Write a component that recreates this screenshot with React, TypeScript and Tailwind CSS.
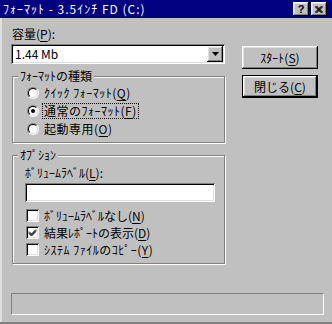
import React from 'react';

const font = { fontFamily: '"Noto Sans CJK JP", "MS UI Gothic", sans-serif' };

const raised =
  'shadow-[inset_-1px_-1px_0_#000,inset_1px_1px_0_#fff,inset_-2px_-2px_0_#808080,inset_2px_2px_0_#dfdfdf]';
const sunken =
  'shadow-[inset_1px_1px_0_#808080,inset_-1px_-1px_0_#fff,inset_2px_2px_0_#000,inset_-2px_-2px_0_#dfdfdf]';

function Key({ k }: { k: string }) {
  return <span className="underline underline-offset-2">{k}</span>;
}

function Radio({ checked }: { checked?: boolean }) {
  return (
    <span className="w-[12px] h-[12px] rounded-full border border-t-[#808080] border-l-[#808080] border-b-white border-r-white flex shrink-0">
      <span className="w-[10px] h-[10px] rounded-full border border-t-black border-l-black border-b-[#dfdfdf] border-r-[#dfdfdf] bg-white flex items-center justify-center">
        {checked && <span className="w-[4px] h-[4px] rounded-full bg-black" />}
      </span>
    </span>
  );
}

function Check({ checked }: { checked?: boolean }) {
  return (
    <span className={`w-[13px] h-[13px] bg-white shrink-0 flex items-center justify-center ${sunken}`}>
      {checked && (
        <svg width="9" height="9" viewBox="0 0 9 9">
          <path d="M1 3.5 L3.5 6 L8 1.5 M1 4.5 L3.5 7 L8 2.5 M1 5.5 L3.5 8 L8 3.5" stroke="#000" strokeWidth="1" fill="none" />
        </svg>
      )}
    </span>
  );
}

function Group({ title, h, children }: { title: string; h: string; children: React.ReactNode }) {
  return (
    <div className={`relative border border-[#808080] shadow-[1px_1px_0_#fff,inset_1px_1px_0_#fff] ${h}`}>
      <span className="absolute left-[5px] top-[-8px] px-[2px] bg-[#c0c0c0] leading-[14px]">{title}</span>
      {children}
    </div>
  );
}

export default function App() {
  return (
    <div className="w-[332px] h-[324px] bg-[#c0c0c0] text-[12px] leading-[14px] text-black flex flex-col" style={font}>
      {/* title bar */}
      <div className="h-[18px] bg-[#000080] flex items-center pl-[3px] pr-[5px] shrink-0">
        <span className="text-white flex-1 leading-[14px] tracking-[1px]">ﾌｫｰﾏｯﾄ - 3.5ｲﾝﾁ FD (C:)</span>
        <div className="flex gap-[2px]">
          <span className={`w-[16px] h-[14px] bg-[#c0c0c0] flex items-center justify-center font-bold text-[11px] leading-none ${raised}`} style={{ fontFamily: '"Liberation Sans", sans-serif' }}>
            ?
          </span>
          <span className={`w-[16px] h-[14px] bg-[#c0c0c0] flex items-center justify-center ${raised}`}>
            <svg width="8" height="7" viewBox="0 0 8 7">
              <path d="M0.5 0 L7.5 7 M1.5 0 L7.5 6 M0.5 1 L6.5 7 M7.5 0 L0.5 7 M6.5 0 L0.5 6 M7.5 1 L1.5 7" stroke="#000" strokeWidth="1" fill="none" />
            </svg>
          </span>
        </div>
      </div>

      {/* body */}
      <div className="flex-1 flex flex-col pl-[11px] pr-[9px] border-b-2 border-[#808080] shadow-[inset_2px_0_0_#dfdfdf]">
        <div className="flex">
          <div className="w-[214px] flex flex-col">
            <div className="mt-[9px] h-[14px] pl-[1px]">
              容量(<Key k="P" />):
            </div>
            <div className={`mt-[3px] h-[20px] bg-white flex items-center pl-[4px] pr-[2px] ${sunken}`}>
              <span className="flex-1">1.44 Mb</span>
              <span className={`w-[16px] h-[16px] bg-[#c0c0c0] flex items-center justify-center ${raised}`}>
                <svg width="7" height="4" viewBox="0 0 7 4">
                  <path d="M0 0 H7 L3.5 4 Z" fill="#000" />
                </svg>
              </span>
            </div>

            <div className="mt-[12px] ml-[1px] w-[213px]">
              <Group title="ﾌｫｰﾏｯﾄの種類" h="h-[67px]">
                <div className="flex flex-col pt-[7px] pl-[14px] tracking-[0.5px]">
                  <div className="h-[18px] flex items-center gap-[4px]">
                    <Radio />
                    <span className="px-[1px]">ｸｲｯｸ ﾌｫｰﾏｯﾄ(<Key k="Q" />)</span>
                  </div>
                  <div className="h-[18px] flex items-center gap-[3px]">
                    <Radio checked />
                    <span className="px-[1px] border border-dotted border-black">
                      通常のﾌｫｰﾏｯﾄ(<Key k="F" />)
                    </span>
                  </div>
                  <div className="h-[18px] flex items-center gap-[4px]">
                    <Radio />
                    <span className="px-[1px]">起動専用(<Key k="O" />)</span>
                  </div>
                </div>
              </Group>
            </div>

            <div className="mt-[12px] ml-[1px] w-[213px]">
              <Group title="ｵﾌﾟｼｮﾝ" h="h-[109px]">
                <div className="flex flex-col pt-[10px] pl-[12px]">
                  <div className="h-[14px]">
                    ﾎﾞﾘｭｰﾑﾗﾍﾞﾙ(<Key k="L" />):
                  </div>
                  <div className={`mt-[3px] w-[190px] h-[19px] bg-white ${sunken}`} />
                  <div className="mt-[5px] flex flex-col pl-[1px]">
                    <div className="h-[17px] flex items-center gap-[5px]">
                      <Check />
                      <span>ﾎﾞﾘｭｰﾑﾗﾍﾞﾙなし(<Key k="N" />)</span>
                    </div>
                    <div className="h-[17px] flex items-center gap-[5px]">
                      <Check checked />
                      <span>結果ﾚﾎﾟｰﾄの表示(<Key k="D" />)</span>
                    </div>
                    <div className="h-[17px] flex items-center gap-[5px]">
                      <Check />
                      <span className="tracking-[0.5px]">ｼｽﾃﾑ ﾌｧｲﾙのｺﾋﾟｰ(<Key k="Y" />)</span>
                    </div>
                  </div>
                </div>
              </Group>
            </div>
          </div>

          <div className="ml-[17px] mt-[28px] flex flex-col gap-[6px]">
            <button className={`w-[76px] h-[23px] bg-[#c0c0c0] flex items-center justify-center ${raised}`}>
              ｽﾀｰﾄ(<Key k="S" />)
            </button>
            <button className="w-[76px] h-[23px] bg-[#c0c0c0] border border-black">
              <span className={`w-full h-full flex items-center justify-center ${raised}`}>
                閉じる(<Key k="C" />)
              </span>
            </button>
          </div>
        </div>

        <div className="mt-[29px] h-[22px] w-[313px] border border-t-[#808080] border-l-[#808080] border-b-white border-r-white" />
      </div>
    </div>
  );
}
